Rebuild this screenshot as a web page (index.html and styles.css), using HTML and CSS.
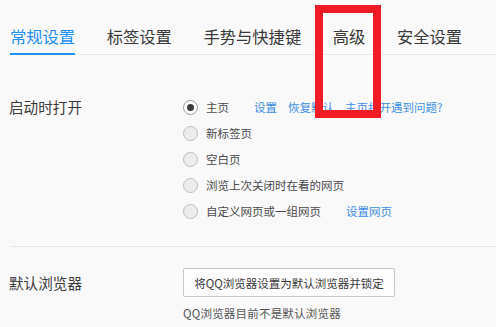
FILE: index.html
```html
<!DOCTYPE html>
<html lang="zh-CN">
<head>
<meta charset="utf-8">
<title>设置</title>
<link rel="stylesheet" href="styles.css">
</head>
<body>
<div class="page">
  <nav class="tabs">
    <span class="tab active">常规设置</span>
    <span class="tab">标签设置</span>
    <span class="tab">手势与快捷键</span>
    <span class="tab">高级</span>
    <span class="tab">安全设置</span>
  </nav>
  <section class="section startup">
    <div class="label">启动时打开</div>
    <div class="options">
      <div class="row"><span class="radio checked"></span><span class="opt">主页</span><a class="link first">设置</a><a class="link">恢复默认</a><a class="link">主页打开遇到问题?</a></div>
      <div class="row"><span class="radio"></span><span class="opt">新标签页</span></div>
      <div class="row"><span class="radio"></span><span class="opt">空白页</span></div>
      <div class="row"><span class="radio"></span><span class="opt">浏览上次关闭时在看的网页</span></div>
      <div class="row"><span class="radio"></span><span class="opt">自定义网页或一组网页</span><a class="link first">设置网页</a></div>
    </div>
  </section>
  <section class="section browser">
    <div class="label tall">默认浏览器</div>
    <div class="options">
      <button class="btn">将QQ浏览器设置为默认浏览器并锁定</button>
      <div class="note">QQ浏览器目前不是默认浏览器</div>
    </div>
  </section>
  <div class="highlight"></div>
</div>
</body>
</html>
```
FILE: styles.css
```css
html, body {
  margin: 0;
  padding: 0;
  background: #f9f9f9;
}
body {
  font-family: "Microsoft YaHei", "Noto Sans CJK SC", "Noto Sans", sans-serif;
  color: #333;
  width: 496px;
  height: 327px;
  overflow: hidden;
}
.page {
  position: relative;
  margin-left: 10px;
  height: 327px;
}
.tabs {
  display: flex;
  gap: 31.6px;
  height: 54px;
  border-bottom: 1px solid #e6e6e6;
  align-items: flex-end;
}
.tab {
  font-size: 16.3px;
  line-height: 20px;
  padding-top: 26px;
  padding-bottom: 7px;
  border-bottom: 2px solid transparent;
  margin-bottom: -1px;
  color: #3a3a3a;
  white-space: nowrap;
}
.tab.active {
  color: #1e90f0;
  border-bottom-color: #1e90f0;
}
.section {
  display: grid;
  grid-template-columns: 173px 1fr;
}
.startup {
  padding-top: 39px;
  padding-bottom: 22px;
  border-bottom: 1px solid #e8e8e8;
}
.browser {
  padding-top: 21px;
}
.label {
  font-size: 14.6px;
  line-height: 26px;
  color: #3a3a3a;
  margin-left: -1px;
}
.label.tall {
  line-height: 29px;
}
.row {
  display: flex;
  align-items: center;
  height: 26px;
  font-size: 11.5px;
  color: #4a4a4a;
  white-space: nowrap;
}
.radio {
  box-sizing: border-box;
  width: 15px;
  height: 15px;
  border-radius: 50%;
  border: 1px solid #bdbdbd;
  background: #ececec;
  margin-right: 8px;
  flex: none;
  display: flex;
  align-items: center;
  justify-content: center;
}
.radio.checked {
  border-color: #9a9a9a;
  background: #fdfdfd;
}
.radio.checked::after {
  content: "";
  width: 7px;
  height: 7px;
  border-radius: 50%;
  background: #3e3e3e;
}
.link {
  color: #3a8ee6;
  margin-left: 11px;
  cursor: pointer;
}
.link.first {
  margin-left: 25px;
}
.btn {
  display: block;
  box-sizing: border-box;
  width: 212px;
  height: 29px;
  padding: 0;
  border: 1px solid #c6c6c6;
  border-radius: 2px;
  background: #fdfdfd;
  font-family: inherit;
  font-size: 11.5px;
  color: #3a3a3a;
}
.note {
  margin-top: 8px;
  font-size: 11.5px;
  line-height: 16px;
  color: #555;
  white-space: nowrap;
  letter-spacing: 0.2px;
}
.highlight {
  position: absolute;
  left: 305px;
  top: 5px;
  width: 66px;
  height: 113px;
  box-sizing: border-box;
  border: 8px solid #ee1c25;
}
```
